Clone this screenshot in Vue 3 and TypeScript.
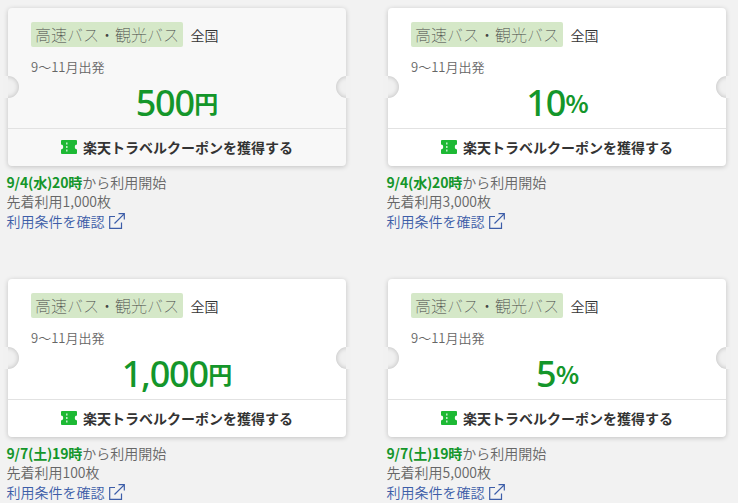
<script setup lang="ts">
interface Coupon {
  amount: string
  unit: string
  start: string
  limit: string
  hover?: boolean
}

const coupons: Coupon[] = [
  { amount: '500', unit: '円', start: '9/4(水)20時', limit: '1,000', hover: true },
  { amount: '10', unit: '%', start: '9/4(水)20時', limit: '3,000' },
  { amount: '1,000', unit: '円', start: '9/7(土)19時', limit: '100' },
  { amount: '5', unit: '%', start: '9/7(土)19時', limit: '5,000' },
]
</script>

<template>
  <main class="coupons">
    <article v-for="(c, i) in coupons" :key="i" class="item">
      <div class="card" :class="{ hover: c.hover }">
        <span class="notch left"></span>
        <span class="notch right"></span>
        <div class="body">
          <div class="heading">
            <span class="tag">高速バス・観光バス</span>
            <span class="area">全国</span>
          </div>
          <p class="period">9～11月出発</p>
          <p class="price">{{ c.amount }}<span class="unit" :class="{ percent: c.unit === '%' }">{{ c.unit }}</span></p>
        </div>
        <div class="action">
          <svg class="ticket" width="16" height="14" viewBox="0 0 17 14" preserveAspectRatio="none">
            <path fill="#1db934" d="M1 0H16Q17 0 17 1V4.6A2.4 2.4 0 0 0 17 9.4V13Q17 14 16 14H1Q0 14 0 13V9.4A2.4 2.4 0 0 0 0 4.6V1Q0 0 1 0Z" />
            <path stroke="#fff" stroke-width="1.2" stroke-dasharray="2 1.6" d="M6.2 2.4V12" />
          </svg>
          <span>楽天トラベルクーポンを獲得する</span>
        </div>
      </div>
      <div class="notes">
        <p><strong>{{ c.start }}</strong>から利用開始</p>
        <p>先着利用{{ c.limit }}枚</p>
        <p class="link">
          <span>利用条件を確認</span>
          <svg class="external" width="16" height="16" viewBox="0 0 16 16" fill="none" stroke="#3c5da8" stroke-width="1.2">
            <path d="M6 3.5H.7V15.3H12.5V9.5M5.5 10.5L15.2.8M9.5.7H15.3V6.5" />
          </svg>
        </p>
      </div>
    </article>
  </main>
</template>

<style>
body {
  background: #f2f2f2;
  overflow: hidden;
}
</style>

<style scoped>
.coupons {
  box-sizing: border-box;
  height: 503px;
  overflow: hidden;
  padding: 8px;
  display: grid;
  grid-template-columns: 338px 338px;
  grid-auto-rows: 271px;
  column-gap: 42px;
  font-family: "Noto Sans CJK JP", sans-serif;
  background: #f2f2f2;
}
p {
  margin: 0;
}
.card {
  position: relative;
  height: 158px;
  border-radius: 4px;
  background: #fff;
  box-shadow: 0 1px 5px rgba(0, 0, 0, 0.2);
}
.card.hover {
  background: #f8f8f8;
}
.notch {
  position: absolute;
  top: 66px;
  width: 15px;
  height: 26px;
  overflow: hidden;
}
.notch::before {
  content: "";
  position: absolute;
  top: 2px;
  width: 22px;
  height: 22px;
  border-radius: 50%;
  background: #f0f0f0;
  box-shadow: inset 0 0 5px rgba(0, 0, 0, 0.22);
}
.notch::after {
  content: "";
  position: absolute;
  top: 2px;
  width: 4px;
  height: 22px;
  background: #f1f1f1;
}
.notch.left {
  left: -4px;
}
.notch.left::before {
  right: 0.5px;
}
.notch.left::after {
  left: 0;
}
.notch.right {
  right: -4px;
}
.notch.right::before {
  left: 0.5px;
}
.notch.right::after {
  right: 0;
}
.body {
  box-sizing: border-box;
  height: 120px;
  padding: 14px 23px 0;
}
.heading {
  display: flex;
  align-items: center;
  height: 25px;
}
.tag {
  height: 25px;
  padding: 0 4px;
  border-radius: 2px;
  background: #d5e8c8;
  color: #444;
  font-size: 16px;
  font-weight: 100;
  line-height: 25px;
}
.area {
  margin-left: 7.5px;
  color: #333;
  font-size: 14px;
  font-weight: 350;
  line-height: 26px;
}
.period {
  margin-top: 10px;
  color: #666;
  font-size: 13px;
  font-weight: 350;
  line-height: 20px;
}
.price {
  display: flex;
  align-items: center;
  justify-content: center;
  height: 50px;
  padding-top: 1px;
  color: #14962a;
  font-family: "Noto Sans", "Noto Sans CJK JP", sans-serif;
  font-size: 36px;
  font-weight: 500;
  line-height: 50px;
  letter-spacing: -1.2px;
}
.unit {
  margin-left: 0.5px;
  font-family: "Noto Sans CJK JP", sans-serif;
  font-size: 24px;
  font-weight: 700;
  letter-spacing: 0;
}
.unit.percent {
  letter-spacing: -1px;
}
.action {
  box-sizing: border-box;
  display: flex;
  align-items: center;
  justify-content: center;
  height: 38px;
  padding-bottom: 2px;
  border-top: 1px solid #e2e2e2;
  color: #333;
  font-size: 14px;
  font-weight: 700;
  line-height: 20px;
}
.ticket {
  margin-right: 6px;
}
.notes {
  margin: 7px 0 0 -1.5px;
  color: #666;
  font-size: 14px;
  font-weight: 350;
  line-height: 19.3px;
}
.notes strong {
  color: #14962a;
  font-weight: 700;
  letter-spacing: -0.15px;
}
.link {
  display: flex;
  align-items: center;
  color: #3c5da8;
}
.external {
  margin-left: 4px;
}
</style>
